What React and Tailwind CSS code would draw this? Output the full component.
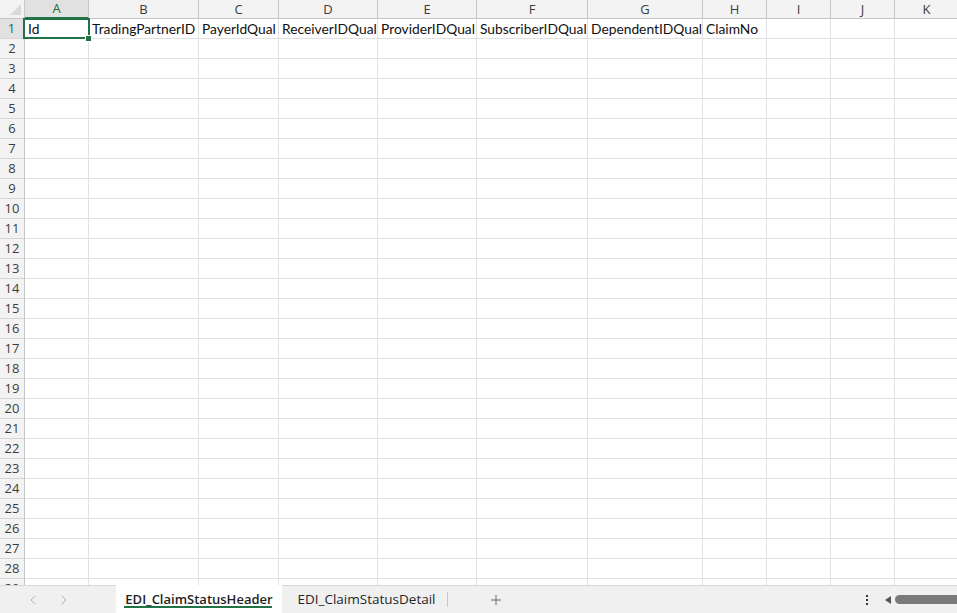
import { ChevronLeft, ChevronRight, Plus } from 'lucide-react';

// 열 정의 (너비는 스크린샷 기준)
const columns = [
  { key: 'A', w: 'w-[64px]' },
  { key: 'B', w: 'w-[110px]' },
  { key: 'C', w: 'w-[80px]' },
  { key: 'D', w: 'w-[99px]' },
  { key: 'E', w: 'w-[99px]' },
  { key: 'F', w: 'w-[111px]' },
  { key: 'G', w: 'w-[115px]' },
  { key: 'H', w: 'w-[64px]' },
  { key: 'I', w: 'w-[64px]' },
  { key: 'J', w: 'w-[64px]' },
  { key: 'K', w: 'w-[64px]' },
];

const headerRow = [
  'Id',
  'TradingPartnerID',
  'PayerIdQual',
  'ReceiverIDQual',
  'ProviderIDQual',
  'SubscriberIDQual',
  'DependentIDQual',
  'ClaimNo',
];

const rowCount = 29;

const cellFont = { fontFamily: 'Lato, "Liberation Sans", sans-serif' };
const uiFont = { fontFamily: '"Open Sans", "Noto Sans", sans-serif' };

function ColumnHeaders() {
  return (
    <div className="flex h-[19px] shrink-0">
      {/* 전체 선택 코너 */}
      <div className="w-[25px] shrink-0 bg-[#f3f3f3] border-r border-b border-[#c6c6c6] relative overflow-hidden">
        <svg className="absolute right-[3px] bottom-[3px]" width="11" height="11" viewBox="0 0 11 11">
          <polygon points="11,0 11,11 0,11" fill="#dadada" />
        </svg>
      </div>
      {columns.map((col, i) => (
        <div
          key={col.key}
          className={`${col.w} shrink-0 flex items-center justify-center pt-[1px] text-[13px] border-r ${
            i === 0
              ? 'bg-[#e1e1e1] text-[#1e6b3f] border-b-2 border-b-[#217346] border-r-[#c6c6c6]'
              : 'bg-[#f3f3f3] text-[#3c3c3c] border-b border-[#c6c6c6]'
          }`}
          style={uiFont}
        >
          {col.key}
        </div>
      ))}
    </div>
  );
}

function Row({ n }) {
  const first = n === 1;
  return (
    <div className="flex h-[20px] shrink-0">
      <div
        className={`w-[25px] shrink-0 flex items-center justify-center pt-[1px] text-[13px] border-b border-[#d6d6d6] ${
          first
            ? 'bg-[#e1e1e1] text-[#1e6b3f] border-r-2 border-r-[#217346]'
            : 'bg-[#f3f3f3] text-[#3c3c3c] border-r border-r-[#c6c6c6]'
        }`}
        style={uiFont}
      >
        {n}
      </div>
      {columns.map((col, i) => (
        <div
          key={col.key}
          className={`${col.w} shrink-0 border-r border-b border-[#e1e1e1] relative flex items-center pt-[2px] pl-[3px] text-[13.8px] text-[#111] whitespace-nowrap`}
          style={cellFont}
        >
          {first && headerRow[i]}
          {first && i === 0 && (
            <>
              <div className="absolute -left-[2px] -top-[1px] w-[67px] h-[21px] border-2 border-[#217346] pointer-events-none" />
              <div className="absolute -right-[4px] -bottom-[4px] w-[7px] h-[7px] bg-[#217346] border border-white z-10" />
            </>
          )}
        </div>
      ))}
    </div>
  );
}

function SheetTabs() {
  return (
    <div className="h-[28px] shrink-0 bg-[#f0f0f0] border-t border-[#d6d6d6] flex items-stretch text-[13px]" style={uiFont}>
      <div className="w-[116px] shrink-0 flex items-center pl-[25px] gap-[15px] text-[#a6a6a6]">
        <ChevronLeft size={16} strokeWidth={1.3} />
        <ChevronRight size={16} strokeWidth={1.3} />
      </div>
      <div className="w-[166px] shrink-0 bg-white -mt-px flex flex-col items-center justify-center relative">
        <span className="font-semibold text-[#1f1f1f] leading-none">EDI_ClaimStatusHeader</span>
        <div className="absolute bottom-[5px] left-[8px] right-[10px] h-[2px] bg-[#217346]" />
      </div>
      <div className="w-[166px] shrink-0 flex items-center justify-center pl-[3px] relative text-[#262626] text-[13.5px]">
        <span className="leading-none">EDI_ClaimStatusDetail</span>
        <div className="absolute right-0 top-[6px] bottom-[6px] w-px bg-[#c8c8c8]" />
      </div>
      <div className="w-[96px] shrink-0 flex items-center justify-center text-[#444]">
        <Plus size={16} strokeWidth={1.2} />
      </div>
      <div className="flex-1" />
      <div className="w-[20px] shrink-0 flex flex-col items-center justify-center gap-[2px]">
        <span className="w-[2px] h-[2px] bg-[#333]" />
        <span className="w-[2px] h-[2px] bg-[#333]" />
        <span className="w-[2px] h-[2px] bg-[#333]" />
      </div>
      <div className="w-[80px] shrink-0 flex items-center pl-[8px] gap-[4px]">
        <svg width="6" height="8" viewBox="0 0 6 8">
          <polygon points="6,0 6,8 0,4" fill="#555" />
        </svg>
        <div className="flex-1 h-[9px] bg-[#7a7a7a] rounded-l-full" />
      </div>
    </div>
  );
}

export default function App() {
  const rows = [];
  for (let n = 1; n <= rowCount; n++) {
    rows.push(<Row key={n} n={n} />);
  }

  return (
    <div className="w-[957px] h-[613px] overflow-hidden bg-white flex flex-col select-none">
      <div className="h-[585px] shrink-0 overflow-hidden flex flex-col">
        <ColumnHeaders />
        {rows}
      </div>
      <SheetTabs />
    </div>
  );
}
